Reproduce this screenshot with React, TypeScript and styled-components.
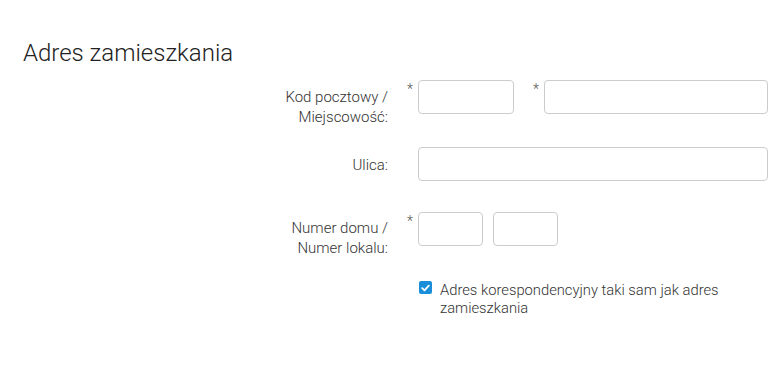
import React from "react";
import styled, { createGlobalStyle } from "styled-components";

const Global = createGlobalStyle`
  html, body { margin: 0; padding: 0; background: #fff; }
  body { font-family: Roboto, "Noto Sans", Arial, sans-serif; color: #444; }
  * { box-sizing: border-box; }
`;

const Page = styled.div`
  padding: 40px 12px 0 23px;
`;

const Heading = styled.h2`
  margin: 0 0 14px 0;
  font-size: 24px;
  line-height: 26px;
  font-weight: 300;
  color: #222;
`;

const Form = styled.div`
  display: flex;
  flex-direction: column;
`;

const Row = styled.div<{ $h: number }>`
  display: grid;
  grid-template-columns: 365px 1fr;
  height: ${(p) => p.$h}px;
  align-items: start;
`;

const Label = styled.label<{ $pt?: number }>`
  text-align: right;
  font-size: 15px;
  line-height: 20px;
  font-weight: 300;
  color: #333;
  padding-top: ${(p) => p.$pt ?? 7}px;
`;

const Fields = styled.div`
  display: flex;
  align-items: flex-start;
`;

const Star = styled.span<{ $w: number }>`
  width: ${(p) => p.$w}px;
  flex: none;
  text-align: right;
  padding-right: 5px;
  padding-top: 2px;
  font-size: 14px;
  line-height: 14px;
  font-weight: 300;
  color: #555;
`;

const Input = styled.input<{ $w?: number; $ml?: number }>`
  ${(p) => (p.$w ? `width: ${p.$w}px; flex: none;` : "flex: 1; min-width: 0;")}
  margin-left: ${(p) => p.$ml ?? 0}px;
  height: 34px;
  border: 1px solid #cccccc;
  border-radius: 4px;
  background: #fff;
  padding: 6px 10px;
  font-family: inherit;
  font-size: 14px;
  outline: none;
`;

const CheckRow = styled.label`
  display: flex;
  align-items: flex-start;
  padding-left: 31px;
  padding-top: 3px;
  gap: 8px;
`;

const Box = styled.span`
  width: 13px;
  height: 13px;
  flex: none;
  border-radius: 2px;
  background: #1b8ed9;
  display: flex;
  align-items: center;
  justify-content: center;
`;

const CheckText = styled.span`
  font-size: 14.75px;
  line-height: 18px;
  font-weight: 300;
  color: #333;
  max-width: 310px;
`;

export default function App() {
  return (
    <>
      <Global />
      <Page>
        <Heading>Adres zamieszkania</Heading>
        <Form>
          <Row $h={67}>
            <Label $pt={7}>
              Kod pocztowy /
              <br />
              Miejscowość:
            </Label>
            <Fields>
              <Star $w={30}>*</Star>
              <Input $w={96} />
              <Star $w={30}>*</Star>
              <Input />
            </Fields>
          </Row>
          <Row $h={65}>
            <Label $pt={8}>Ulica:</Label>
            <Fields>
              <Star $w={30} />
              <Input />
            </Fields>
          </Row>
          <Row $h={66}>
            <Label $pt={6}>
              Numer domu /
              <br />
              Numer lokalu:
            </Label>
            <Fields>
              <Star $w={30}>*</Star>
              <Input $w={65} />
              <Input $w={65} $ml={10} />
            </Fields>
          </Row>
          <Row $h={60}>
            <span />
            <CheckRow>
              <Box>
                <svg width="9" height="8" viewBox="0 0 9 8">
                  <path d="M1.2 4.2 L3.5 6.3 L7.8 1.6" fill="none" stroke="#fff" strokeWidth="1.8" strokeLinecap="round" strokeLinejoin="round" />
                </svg>
              </Box>
              <CheckText>Adres korespondencyjny taki sam jak adres zamieszkania</CheckText>
            </CheckRow>
          </Row>
        </Form>
      </Page>
    </>
  );
}
